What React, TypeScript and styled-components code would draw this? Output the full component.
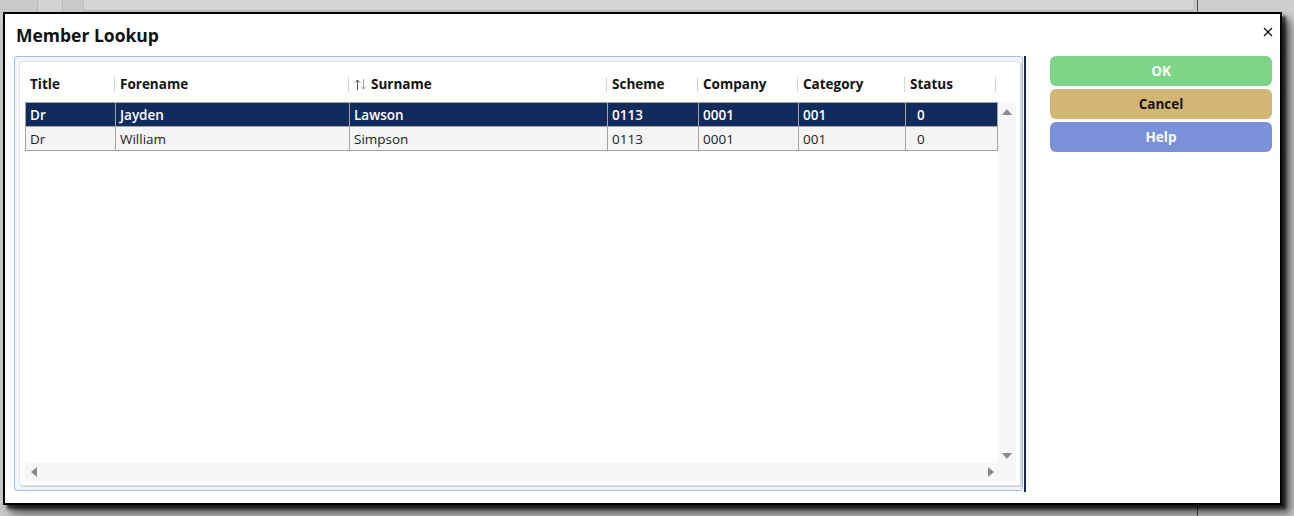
import styled, { createGlobalStyle, css } from "styled-components"

const GlobalStyle = createGlobalStyle`
  html, body {
    margin: 0;
    padding: 0;
  }
  body {
    font-family: "Open Sans", "Noto Sans", sans-serif;
    background: #c7c7c7;
  }
`

interface Member {
  title: string
  forename: string
  surname: string
  scheme: string
  company: string
  category: string
  status: string
}

const members: Member[] = [
  { title: "Dr", forename: "Jayden", surname: "Lawson", scheme: "0113", company: "0001", category: "001", status: "0" },
  { title: "Dr", forename: "William", surname: "Simpson", scheme: "0113", company: "0001", category: "001", status: "0" }
]

const COLS = "90px 234px 258px 91px 100px 107px 91px"

const SortIcon = () => (
  <svg width="13" height="13" viewBox="0 0 13 13">
    <path d="M3.5 12V2M1 4.5L3.5 2L6 4.5" stroke="#555" strokeWidth="1" fill="none" />
    <path d="M9.5 1V11M7 8.5L9.5 11L12 8.5" stroke="#9a9a9a" strokeWidth="1" fill="none" />
  </svg>
)

const CloseIcon = () => (
  <svg width="10" height="10" viewBox="0 0 10 10">
    <path d="M1 1L9 9M9 1L1 9" stroke="#111" strokeWidth="1.3" />
  </svg>
)

const App = () => {
  return (
    <Desktop>
      <GlobalStyle />
      <Backdrop>
        <MainPane>
          <TopStrip>
            <StripButton />
            <StripBar />
          </TopStrip>
        </MainPane>
        <PaneDivider />
        <SidePane />
      </Backdrop>

      <Dialog>
        <TitleBar>
          <Title>Member Lookup</Title>
          <CloseButton>
            <CloseIcon />
          </CloseButton>
        </TitleBar>

        <Body>
          <Panel>
            <GridBox>
              <GridArea>
                <TableWrap>
                  <HeaderRow>
                    <HeaderCell>Title</HeaderCell>
                    <HeaderCell>Forename</HeaderCell>
                    <HeaderCell>
                      <SortIcon />
                      Surname
                    </HeaderCell>
                    <HeaderCell>Scheme</HeaderCell>
                    <HeaderCell>Company</HeaderCell>
                    <HeaderCell>Category</HeaderCell>
                    <HeaderCell>Status</HeaderCell>
                  </HeaderRow>
                  <TableBody>
                    {members.map((m, i) => (
                      <Row key={m.surname} selected={i === 0}>
                        <Cell>{m.title}</Cell>
                        <Cell>{m.forename}</Cell>
                        <Cell>{m.surname}</Cell>
                        <Cell>{m.scheme}</Cell>
                        <Cell>{m.company}</Cell>
                        <Cell>{m.category}</Cell>
                        <Cell indent>{m.status}</Cell>
                      </Row>
                    ))}
                  </TableBody>
                </TableWrap>
                <VScroll>
                  <Arrow dir="up" />
                  <Arrow dir="down" />
                </VScroll>
                <HScroll>
                  <Arrow dir="left" />
                  <Arrow dir="right" />
                </HScroll>
                <Corner />
              </GridArea>
            </GridBox>
          </Panel>
          <Splitter />
          <Buttons>
            <ActionButton variant="ok">OK</ActionButton>
            <ActionButton variant="cancel">Cancel</ActionButton>
            <ActionButton variant="help">Help</ActionButton>
          </Buttons>
        </Body>
      </Dialog>
    </Desktop>
  )
}

const Desktop = styled.div`
  position: relative;
  width: 1294px;
  height: 516px;
  overflow: hidden;
  background: #c7c7c7;
`

const Backdrop = styled.div`
  display: flex;
  height: 100%;
`

const MainPane = styled.div`
  width: 1197px;
  background: #c9c9c9;
`

const TopStrip = styled.div`
  display: flex;
  align-items: flex-start;
  gap: 20px;
  height: 14px;
  padding-left: 37px;
  padding-right: 2px;
`

const StripButton = styled.div`
  width: 24px;
  height: 14px;
  border: 1px solid #b8b8b8;
  border-top: none;
  border-radius: 0 0 5px 5px;
  background: #d2d2d2;
`

const StripBar = styled.div`
  flex: 1;
  height: 10px;
  border: 1px solid #bdbdbd;
  border-top: none;
  border-radius: 0 0 4px 4px;
  background: #d6d6d6;
`

const PaneDivider = styled.div`
  width: 1px;
  background: #4a4a4a;
  box-shadow: 3px 0 0 #e4e4e4;
`

const SidePane = styled.div`
  flex: 1;
  background: #cfcfcf;
`

const Dialog = styled.div`
  position: absolute;
  left: 3px;
  top: 12px;
  width: 1279px;
  height: 493px;
  box-sizing: border-box;
  border: 2px solid #000;
  background: #fff;
  display: flex;
  flex-direction: column;
  box-shadow: 4px 4px 3px rgba(0, 0, 0, 0.7), 8px 8px 8px rgba(0, 0, 0, 0.45),
    10px 10px 14px rgba(0, 0, 0, 0.2);
`

const TitleBar = styled.div`
  display: flex;
  align-items: flex-start;
  justify-content: space-between;
  height: 42px;
  padding: 9px 7px 0 11px;
  box-sizing: border-box;
`

const Title = styled.h1`
  margin: 0;
  font-size: 17.5px;
  font-weight: 700;
  color: #111;
`

const CloseButton = styled.div`
  display: flex;
  padding-top: 4px;
`

const Body = styled.div`
  display: flex;
  flex: 1;
  padding: 0 8px 12px 9px;
  min-height: 0;
`

const Panel = styled.div`
  width: 1009px;
  box-sizing: border-box;
  border: 1px solid #a9bbd2;
  border-radius: 3px;
  padding: 4px 2px 4px 4px;
  background: #f3f6fa;
  display: flex;
`

const GridBox = styled.div`
  flex: 1;
  background: #fff;
  border: 1px solid #dfe4ea;
  border-radius: 3px;
  box-shadow: 1px 1px 1px #c7ced8;
  padding: 0 4px 4px 5px;
  display: flex;
`

const GridArea = styled.div`
  flex: 1;
  display: grid;
  grid-template-columns: 973px 18px;
  grid-template-rows: 1fr 18px;
`

const TableWrap = styled.div`
  padding-top: 10px;
`

const HeaderRow = styled.div`
  display: grid;
  grid-template-columns: ${COLS};
  height: 24px;
  margin-bottom: 6px;
`

const HeaderCell = styled.div`
  position: relative;
  display: flex;
  align-items: center;
  gap: 4px;
  padding-left: 5px;
  font-size: 13.5px;
  font-weight: 700;
  color: #111;

  &::after {
    content: "";
    position: absolute;
    right: 0;
    top: 5px;
    height: 15px;
    width: 1px;
    background: #d4d4d4;
  }
`

const TableBody = styled.div`
  border: 1px solid #a3a3a3;
  border-bottom: none;
`

const Row = styled.div<{ selected?: boolean }>`
  display: grid;
  grid-template-columns: ${COLS};
  height: 24px;
  box-sizing: border-box;
  border-bottom: 1px solid #a3a3a3;
  background: ${(p) => (p.selected ? "#102b5c" : "#f5f5f5")};
  color: ${(p) => (p.selected ? "#fff" : "#222")};
  font-weight: ${(p) => (p.selected ? 600 : 400)};
`

const Cell = styled.div<{ indent?: boolean }>`
  display: flex;
  align-items: center;
  padding-left: ${(p) => (p.indent ? "11px" : "4px")};
  font-size: 13.5px;
  border-right: 1px solid #a3a3a3;
  white-space: nowrap;
  overflow: hidden;

  &:first-child {
    margin-left: -1px;
    padding-left: 5px;
  }
  &:last-child {
    border-right: none;
  }
`

const track = css`
  background: #f7f7f7;
  display: flex;
  justify-content: space-between;
  align-items: center;
`

const VScroll = styled.div`
  ${track};
  flex-direction: column;
  margin-top: 40px;
  padding: 7px 0 4px;
`

const HScroll = styled.div`
  ${track};
  padding: 0 4px 0 6px;
`

const Corner = styled.div`
  background: #f7f7f7;
`

const arrowShapes = {
  up: css`
    border-left: 5px solid transparent;
    border-right: 5px solid transparent;
    border-bottom: 6px solid #8a8a8a;
  `,
  down: css`
    border-left: 5px solid transparent;
    border-right: 5px solid transparent;
    border-top: 6px solid #8a8a8a;
  `,
  left: css`
    border-top: 5px solid transparent;
    border-bottom: 5px solid transparent;
    border-right: 6px solid #8a8a8a;
  `,
  right: css`
    border-top: 5px solid transparent;
    border-bottom: 5px solid transparent;
    border-left: 6px solid #8a8a8a;
  `
}

const Arrow = styled.div<{ dir: keyof typeof arrowShapes }>`
  width: 0;
  height: 0;
  ${(p) => arrowShapes[p.dir]};
`

const Splitter = styled.div`
  width: 2px;
  margin-left: 1px;
  background: #1b2a57;
  margin-bottom: -1px;
`

const buttonColors = {
  ok: { bg: "#7dd587", fg: "#fff" },
  cancel: { bg: "#d3b674", fg: "#111" },
  help: { bg: "#7a90d8", fg: "#fff" }
}

const Buttons = styled.div`
  display: flex;
  flex-direction: column;
  gap: 3px;
  margin-left: 24px;
  width: 222px;
`

const ActionButton = styled.div<{ variant: keyof typeof buttonColors }>`
  height: 30px;
  border-radius: 6px;
  display: flex;
  align-items: center;
  justify-content: center;
  font-size: 13.5px;
  font-weight: 700;
  background: ${(p) => buttonColors[p.variant].bg};
  color: ${(p) => buttonColors[p.variant].fg};
`

export default App
